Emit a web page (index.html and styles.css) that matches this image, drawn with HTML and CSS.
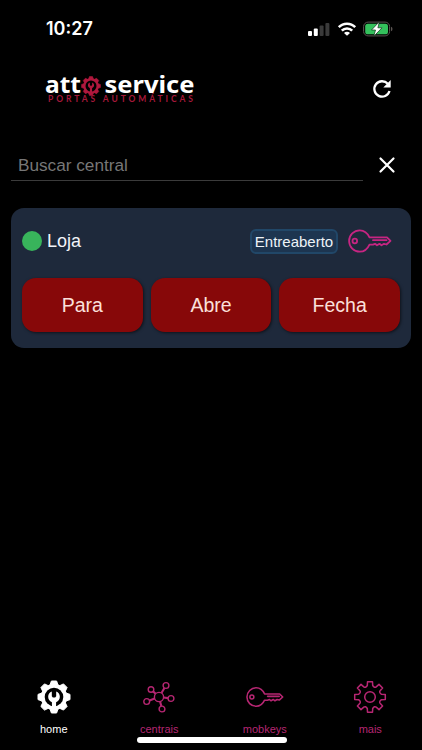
FILE: index.html
```html
<!DOCTYPE html>
<html lang="pt-BR">
<head>
<meta charset="utf-8">
<meta name="viewport" content="width=device-width, initial-scale=1">
<title>Atto Service</title>
<link rel="stylesheet" href="styles.css">
</head>
<body>
<svg class="defs" width="0" height="0" aria-hidden="true">
  <symbol id="gear" viewBox="-17 -17 34 34">
    <path stroke-linejoin="round" d="M-2.7-11.5L-2.500-15.300H2.500L2.700-11.500Q4.500-8.800 6.200-10.100L9-12.600L12.600-9L10.100-6.200Q8.800-4.500 11.500-2.700L15.300-2.500V2.500L11.500 2.700Q8.800 4.500 10.100 6.200L12.600 9L9 12.600L6.200 10.100Q4.500 8.800 2.700 11.500L2.500 15.300H-2.500L-2.700 11.500Q-4.500 8.800-6.200 10.100L-9 12.600L-12.600 9L-10.100 6.200Q-8.800 4.500-11.500 2.700L-15.300 2.500V-2.500L-11.500-2.700Q-8.800-4.500-10.100-6.200L-12.600-9L-9-12.600L-6.200-10.100Q-4.500-8.800-2.700-11.500Z"/>
  </symbol>
  <symbol id="gear-solid" viewBox="-17 -17 34 34">
    <circle r="13"/>
    <path stroke="currentColor" stroke-linejoin="round" d="M-4-12L-2.600-16H2.600L4-12L5.700-11.300L9.500-13.100L13.100-9.500L11.300-5.700L12-4L16-2.600V2.600L12 4L11.300 5.700L13.100 9.500L9.500 13.100L5.700 11.300L4 12L2.600 16H-2.600L-4 12L-5.700 11.300L-9.500 13.100L-13.100 9.500L-11.300 5.700L-12 4L-16 2.600V-2.600L-12-4L-11.300-5.700L-13.100-9.500L-9.500-13.100L-5.700-11.300Z"/>
  </symbol>
  <symbol id="wrench" viewBox="-12 -12 24 24">
    <path d="M-2 12V4C-4.300 3-5.600 1.100-5.600-1.200C-5.600-3.500-4.300-5.500-2.100-6.300V-1.700L-1.100-.6H1.100L2.100-1.700V-6.300C4.300-5.500 5.600-3.500 5.600-1.200C5.600 1.100 4.300 3 2 4V12Z"/>
  </symbol>
  <symbol id="key" viewBox="0 0 44 26">
    <g fill="none" stroke="currentColor" stroke-width="1.8" stroke-linejoin="round" stroke-linecap="round">
      <path d="M21.500 9.400C19.500 5 16 2.300 11.800 2.300A10.700 10.700 0 0 0 11.800 23.700C16 23.700 19.500 21 21.500 16.600H25L27 15.800L29 17.300L31.500 15.800L33.500 17.300L36 15.800L38.500 16.500L42.500 12.900L39 9.400Z"/>
      <circle cx="6.800" cy="13" r="2.300"/>
      <path d="M25 12.200H38.500"/>
    </g>
  </symbol>
</svg>
<div class="screen">
  <header class="status">
    <span class="time">10:27</span>
    <div class="indicators">
      <svg width="22" height="14" viewBox="0 0 22 14">
        <g fill="#fff"><rect y="9" width="4" height="5" rx="1"/><rect x="5.800" y="6.500" width="4" height="7.500" rx="1"/></g>
        <g fill="#3a3a3a"><rect x="11.600" y="3.500" width="4" height="10.500" rx="1"/><rect x="17.400" y="1" width="4" height="13" rx="1"/></g>
      </svg>
      <svg width="18" height="14" viewBox="0 0 18 14" fill="none" stroke="#fff" stroke-width="2.500">
        <path d="M.8 5.200A11.300 11.300 0 0 1 17.200 5.200"/><path d="M3.800 8.700A7 7 0 0 1 14.200 8.700"/>
        <path fill="#fff" stroke="none" d="M9 13.800L6 10.900A4.200 4.200 0 0 1 12 10.900Z"/>
      </svg>
      <svg width="30" height="16" viewBox="0 0 30 16">
        <rect x=".6" y="1.100" width="26" height="13.800" rx="4.500" fill="none" stroke="#5c5552"/>
        <rect x="2.200" y="2.700" width="22.800" height="10.600" rx="2.600" fill="#34c05c"/>
        <path d="M28 5.700Q29.500 6.300 29.500 8T28 10.300Z" fill="#5c5552"/>
        <path d="M16.300 .8L8.500 9H12.500L10.800 15.300L19 6.800H14.900Z" fill="#fff" stroke="#10301a" stroke-width=".7"/>
      </svg>
    </div>
  </header>

  <div class="brandbar">
    <div class="logo">
      <svg class="logo-top" width="152" height="23" viewBox="0 0 152 23">
        <text class="logo-name" x="0" y="20" textLength="36" lengthAdjust="spacingAndGlyphs">att</text>
        <use href="#gear-solid" x="36" y="3" width="20" height="20" fill="#b0183d" color="#b0183d"/>
        <circle cx="46" cy="13" r="5.500" fill="#000"/>
        <use href="#wrench" x="39.500" y="6.500" width="13" height="13" fill="#b0183d"/>
        <text class="logo-name" x="59.500" y="20" textLength="90" lengthAdjust="spacingAndGlyphs">service</text>
      </svg>
      <svg class="logo-bottom" width="152" height="10" viewBox="0 0 152 10">
        <text class="logo-sub" x="3" y="6.200" textLength="145">PORTAS AUTOMÁTICAS</text>
      </svg>
    </div>
    <svg class="refresh" width="20" height="20" viewBox="0 0 20 20" fill="none" stroke="#fff" stroke-width="2.300">
      <path d="M15.800 4.800A7.700 7.700 0 1 0 17.500 12"/><path d="M18.700 1V8.400H11.300Z" fill="#fff" stroke="none"/>
    </svg>
  </div>

  <div class="search">
    <input class="search-input" type="text" placeholder="Buscar central">
    <svg class="clear" width="16" height="16" viewBox="0 0 16 16" stroke="#fff" stroke-width="2.200" stroke-linecap="round">
      <path d="M1.500 1.500L14.500 14.500M14.500 1.500L1.500 14.500"/>
    </svg>
  </div>

  <main class="card">
    <div class="card-head">
      <span class="dot"></span>
      <span class="name">Loja</span>
      <span class="badge">Entreaberto</span>
      <svg class="card-key" width="44" height="26"><use href="#key"/></svg>
    </div>
    <div class="actions">
      <button>Para</button>
      <button>Abre</button>
      <button>Fecha</button>
    </div>
  </main>

  <nav class="tabs">
    <a class="tab active">
      <svg width="38" height="36" viewBox="-19 -18 38 36">
        <use href="#gear-solid" x="-18.500" y="-17" width="37" height="34" fill="#fff"/>
        <circle r="9.300" fill="#000"/>
        <use href="#wrench" x="-12.500" y="-11.500" width="25" height="25" fill="#fff"/>
      </svg>
      <span>home</span>
    </a>
    <a class="tab">
      <svg width="34" height="36" viewBox="-17 -18 34 36" fill="none" stroke="currentColor" stroke-width="1.400">
        <circle r="4.600"/>
        <circle cx="-8" cy="-7.500" r="2.800"/><circle cx="7" cy="-11.500" r="2.900"/><circle cx="12" cy="1.500" r="2.900"/><circle cx="3" cy="12" r="2.900"/><circle cx="-12.300" cy="4.500" r="2.900"/>
        <path stroke-width="2.100" d="M-6-5.600L-3.300-3.200M5.400-9L2.500-4M9.100 1.100L4.600.5M2.300 9.100L1.100 4.500M-9.500 3.500L-4.300 1.600"/>
      </svg>
      <span>centrais</span>
    </a>
    <a class="tab">
      <svg width="38" height="36" viewBox="0 0 38 36"><use href="#key" y="6.800" width="38" height="22.500"/></svg>
      <span>mobkeys</span>
    </a>
    <a class="tab">
      <svg width="34" height="36" viewBox="-17 -18 34 36" fill="none" stroke="currentColor" stroke-width="1.500">
        <use href="#gear" x="-17" y="-17" width="34" height="34"/><circle r="5.300"/>
      </svg>
      <span>mais</span>
    </a>
  </nav>
  <div class="home-indicator"></div>
</div>
</body>
</html>
```
FILE: styles.css
```css
* { box-sizing: border-box; }

body {
  margin: 0;
  background: #000;
  color: #fff;
  font-family: "Liberation Sans", Arial, sans-serif;
}

svg { display: block; flex: none; overflow: visible; }
.defs { position: absolute; }

.screen {
  position: relative;
  display: flex;
  flex-direction: column;
  height: 750px;
  overflow: hidden;
}

.status {
  display: flex;
  justify-content: space-between;
  align-items: center;
  height: 58px;
  padding: 0 29px 0 46px;
}
.time {
  font: 600 18px/22px Inter, sans-serif;
}
.indicators { display: flex; align-items: center; gap: 8px; }
.indicators svg:last-child { margin-left: -1px; }

.brandbar {
  display: flex;
  justify-content: space-between;
  align-items: flex-start;
  height: 91px;
  padding: 15px 30px 0 45px;
}
.logo-name {
  fill: #fff;
  font: 700 23.5px "Noto Sans", sans-serif;
}
.logo-sub {
  fill: #a5183a;
  font: 700 8.5px Lato, sans-serif;
}
.refresh { margin-top: 6px; }

.search {
  display: flex;
  align-items: center;
  gap: 16px;
  height: 32px;
  padding: 0 27px 0 11px;
}
.search-input {
  flex: 1;
  min-width: 0;
  height: 32px;
  padding: 2px 6px 0 7px;
  border: 0;
  border-bottom: 1px solid #3b3b3b;
  background: transparent;
  color: #fff;
  font: 17.2px "Liberation Sans", Arial, sans-serif;
  outline: 0;
}
.search-input::placeholder { color: #777; opacity: 1; }

.card {
  height: 140px;
  margin: 27px 11px 0 11px;
  padding: 18px 11px 0;
  border-radius: 13px;
  background: #1e293b;
}
.card-head { display: flex; align-items: center; height: 30px; }
.dot { width: 20px; height: 20px; border-radius: 50%; background: #38b45b; }
.name { margin-left: 5px; color: #f2f4f8; font-size: 18px; }
.badge {
  width: 88px;
  height: 25px;
  margin-left: auto;
  border: 2px solid #214768;
  border-radius: 6px;
  background: #1d3550;
  color: #edf3f8;
  font-size: 15px;
  line-height: 22px;
  text-align: center;
  white-space: nowrap;
}
.card-key { margin: 0 8px 0 10px; color: #c62582; }

.actions {
  display: grid;
  grid-template-columns: repeat(3, 1fr);
  gap: 8px;
  margin-top: 22px;
}
.actions button {
  height: 54px;
  padding: 0;
  border: 0;
  border-radius: 14px;
  background: #870809;
  box-shadow: 1px 1px 3px rgba(0, 0, 0, 0.55);
  color: #fbe0dc;
  font: 19.5px "Liberation Sans", Arial, sans-serif;
}

.tabs {
  display: grid;
  grid-template-columns: repeat(4, 1fr);
  margin: auto -1px 0 1px;
  height: 71px;
}
.tab {
  display: flex;
  flex-direction: column;
  align-items: center;
  gap: 8px;
  color: #b62672;
  font-size: 11px;
  line-height: 12px;
}
.tab.active { color: #fff; }

.home-indicator {
  position: absolute;
  left: 137px;
  bottom: 7px;
  width: 150px;
  height: 6px;
  border-radius: 3px;
  background: #fff;
}
```
